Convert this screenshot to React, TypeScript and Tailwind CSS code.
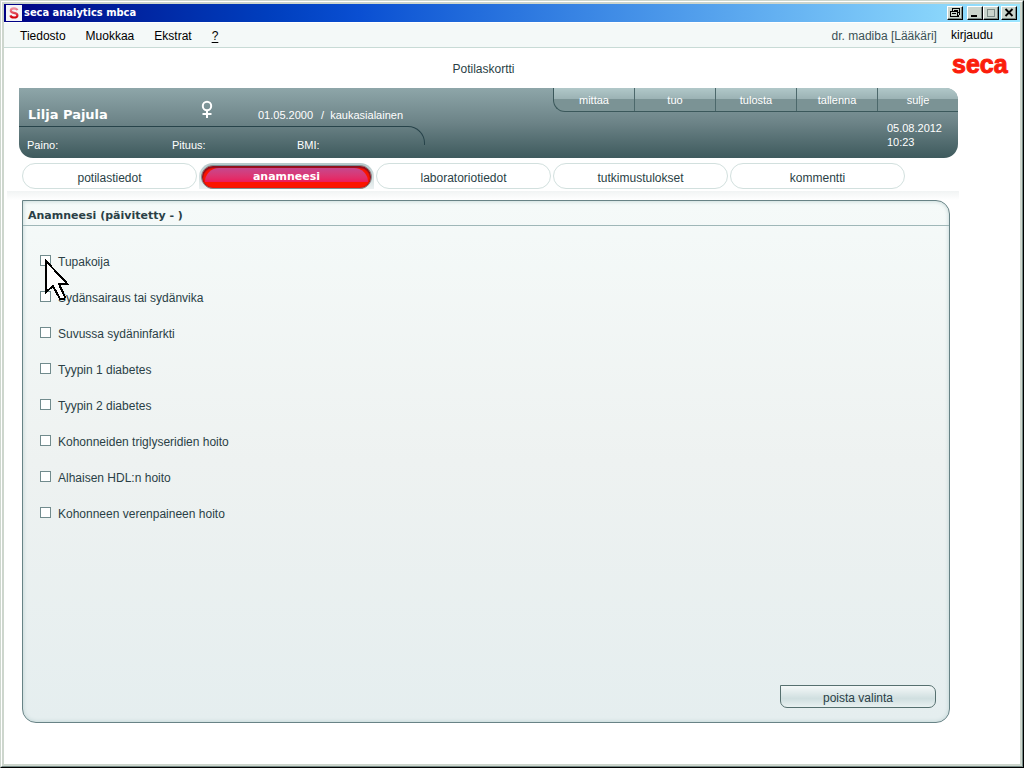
import type { ReactNode } from "react";

const menuItems = ["Tiedosto", "Muokkaa", "Ekstrat"];

const actions = ["mittaa", "tuo", "tulosta", "tallenna", "sulje"];

const tabs = [
  { label: "potilastiedot", active: false },
  { label: "anamneesi", active: true },
  { label: "laboratoriotiedot", active: false },
  { label: "tutkimustulokset", active: false },
  { label: "kommentti", active: false },
];

const conditions = [
  "Tupakoija",
  "Sydänsairaus tai sydänvika",
  "Suvussa sydäninfarkti",
  "Tyypin 1 diabetes",
  "Tyypin 2 diabetes",
  "Kohonneiden triglyseridien hoito",
  "Alhaisen HDL:n hoito",
  "Kohonneen verenpaineen hoito",
];

function WindowButton({
  label,
  children,
}: {
  label: string;
  children: ReactNode;
}) {
  return (
    <button
      type="button"
      aria-label={label}
      className="flex h-[14px] w-4 items-center justify-center border border-t-white border-l-white border-r-black border-b-black bg-[#cbd5cd] shadow-[inset_-1px_-1px_0_#7d8c88]"
    >
      <svg
        width="14"
        height="12"
        viewBox="0 0 14 12"
        fill="none"
        stroke="#000"
        shapeRendering="crispEdges"
        className="shrink-0"
      >
        {children}
      </svg>
    </button>
  );
}

function TitleBar() {
  return (
    <div className="flex h-[18px] items-center bg-linear-to-r from-[#000084] via-[#0a4fd2] via-35% to-[#9be6ff] pr-[3px] pl-[2px]">
      <svg width="16" height="16" viewBox="0 0 16 16" className="shrink-0">
        <defs>
          <linearGradient id="appIcon" x1="0" y1="0" x2="0" y2="1">
            <stop offset="0%" stopColor="#ef8d9d" />
            <stop offset="100%" stopColor="#d4000d" />
          </linearGradient>
        </defs>
        <rect width="16" height="16" fill="#f4f4f8" />
        <path
          d="M11.4 5.2C10.9 3.9 9.6 3.4 8 3.4C6.1 3.4 4.8 4.2 4.8 5.7C4.8 8.6 11.4 7 11.4 10.2C11.4 11.8 10 12.5 8 12.5C6.1 12.5 4.8 11.9 4.4 10.4"
          fill="none"
          stroke="url(#appIcon)"
          strokeWidth="2.2"
        />
      </svg>
      <span className="ml-[2px] font-['DejaVu_Sans_Condensed','DejaVu_Sans',sans-serif] text-[11px] font-bold text-white">
        seca analytics mbca
      </span>
      <div className="ml-auto flex">
        <WindowButton label="Tulosta näyttö">
          <path d="M4.5 5V1.5H11.5V8M2.5 4.5H9.5V9.5H2.5ZM9 9.5H10.5V8M4 6.5H8M6 3.5H10M10 5.5H12" />
        </WindowButton>
        <div className="ml-1 flex">
          <WindowButton label="Pienennä">
            <path d="M3 9H9" strokeWidth="2" />
          </WindowButton>
          <WindowButton label="Suurenna">
            <path d="M3 2H11M3.5 2V10M10.5 2V10M3 9.5H11" stroke="#7d8c88" />
          </WindowButton>
        </div>
        <div className="ml-[2px] flex">
          <WindowButton label="Sulje ikkuna">
            <path
              d="M3.5 2L10.5 9M10.5 2L3.5 9"
              strokeWidth="1.8"
              shapeRendering="auto"
            />
          </WindowButton>
        </div>
      </div>
    </div>
  );
}

function MenuBar() {
  return (
    <nav className="mt-px flex h-[25px] items-center border-b border-[#c8dbd6] bg-[#f4f9f8] pt-px pr-[27px] pl-4">
      <div className="flex gap-5">
        {menuItems.map((item) => (
          <button key={item} type="button">
            {item}
          </button>
        ))}
        <button type="button" className="underline underline-offset-2">
          ?
        </button>
      </div>
      <span className="ml-auto text-[#3c5256]">dr. madiba [Lääkäri]</span>
      <button type="button" className="ml-[14px] pb-[2px]">
        kirjaudu
      </button>
    </nav>
  );
}

function PatientHeader() {
  return (
    <header className="mr-[62px] ml-[15px] flex h-[70px] justify-between overflow-hidden rounded-tr-[12px] rounded-b-[14px] bg-linear-to-b from-[#8ea6a9] via-[#6c8387] via-50% to-[#3e5a5d] text-[11px] text-white">
      <div className="w-[406px]">
        <div className="flex h-[38px] items-end pb-1 pl-[9px]">
          <h2 className="w-[173px] font-['DejaVu_Sans',sans-serif] text-[13px] leading-[14px] font-bold">
            Lilja Pajula
          </h2>
          <svg
            width="12"
            height="22"
            viewBox="0 0 12 22"
            fill="none"
            stroke="#fff"
            strokeWidth="2"
            role="img"
            aria-label="nainen"
          >
            <circle cx="6" cy="6" r="4.2" />
            <path d="M6 10V18M1.500 14H10.500" />
          </svg>
          <span className="ml-[45px] leading-[14px]">01.05.2000</span>
          <span className="ml-2 leading-[14px]">/ &nbsp;kaukasialainen</span>
        </div>
        <div className="flex h-[19px] rounded-tr-[17px] border-t border-r border-[#27434a] pt-[11px] pl-2 leading-[14px]">
          <span className="w-[145px]">Paino:</span>
          <span className="w-[125px]">Pituus:</span>
          <span>BMI:</span>
        </div>
      </div>

      <div className="w-[405px]">
        <div className="flex h-6 overflow-hidden rounded-bl-[12px] border-b border-l border-[#3b585b] bg-linear-to-b from-[#b1c8c9] from-0% via-[#9ab1b3] via-50% to-[#7b9395] to-50%">
          {actions.map((label) => (
            <button
              key={label}
              type="button"
              className="flex-1 border-r border-[#4c686b] last:border-r-0"
            >
              {label}
            </button>
          ))}
        </div>
        <div className="flex justify-end pt-[9px] pr-4 leading-[14px]">
          <time dateTime="2012-08-05T10:23">
            05.08.2012
            <br />
            10:23
          </time>
        </div>
      </div>
    </header>
  );
}

function Tabs() {
  return (
    <div className="mr-[61px] ml-[3px] bg-linear-to-b from-white from-79% via-[#f1f4f4] via-79% to-white pt-[5px] pb-[11px]">
      <div role="tablist" className="ml-[15px] flex gap-[2px]">
        {tabs.map(({ label, active }) =>
          active ? (
            <div
              key={label}
              className="w-[175px] rounded-t-[14px] bg-linear-to-b from-[#b4c8ca] to-[#edf2f2] px-[2px] pt-[2px]"
            >
              {/* red pill with a glossy pink upper half */}
              <button
                type="button"
                role="tab"
                aria-selected="true"
                className="flex h-6 w-full rounded-full border border-[#7b9195] bg-[#fb1400] px-[3px] font-['DejaVu_Sans',sans-serif] text-[11px] leading-[14px] font-bold text-white shadow-[inset_0_1px_1px_1px_#8d1020]"
              >
                <span className="mt-[2px] flex h-[14px] flex-1 justify-center rounded-t-full rounded-b-[6px] bg-linear-to-b from-[#c6468d] to-[#ed175a] pt-[2px]">
                  {label}
                </span>
              </button>
            </div>
          ) : (
            <button
              key={label}
              type="button"
              role="tab"
              aria-selected="false"
              className="h-[26px] w-[175px] rounded-full border border-[#d2e0de] bg-white pt-[3px] text-[#2a3f46]"
            >
              {label}
            </button>
          ),
        )}
      </div>
    </div>
  );
}

function Cursor() {
  return (
    <svg
      width="26"
      height="44"
      viewBox="0 0 26 44"
      shapeRendering="crispEdges"
      className="pointer-events-none absolute top-[5px] left-1"
      aria-hidden="true"
    >
      <path
        d="M2 2V33L9 27L16 40H20L21 38L15 25H23.500Z"
        fill="#fff"
        stroke="#000"
        strokeWidth="2"
      />
    </svg>
  );
}

function AnamnesisPanel() {
  return (
    <section className="mr-[70px] mb-[41px] ml-[18px] flex flex-1 flex-col rounded-tr-[14px] rounded-b-[14px] border border-[#688386] bg-linear-to-b from-[#f5faf9] via-[#eef2f1] via-50% to-[#e5eeef] text-[#2a3f46] shadow-[inset_0_0_4px_#b9cfcf]">
      <h1 className="h-[25px] border-b border-[#9fb7b8] pt-2 pl-[5px] font-['DejaVu_Sans',sans-serif] text-[11px] leading-[14px] font-bold">
        Anamneesi (päivitetty - )
      </h1>
      <ul className="flex flex-col gap-5 pt-7 pl-[17px]">
        {conditions.map((condition, i) => (
          <li key={condition} className="relative flex h-4">
            <label className="flex items-center gap-[7px]">
              <input
                type="checkbox"
                className="mb-[3px] size-[11px] appearance-none border border-[#718b8d] bg-white checked:bg-[#718b8d]"
              />
              {condition}
            </label>
            {i === 0 && (
              <div className="absolute top-0 left-0 z-10">
                <Cursor />
              </div>
            )}
          </li>
        ))}
      </ul>
      <div className="mt-auto flex justify-end pt-6 pr-[13px] pb-[14px]">
        <button
          type="button"
          className="h-[23px] w-[156px] rounded-[7px] rounded-tl-none border border-[#56706f] bg-linear-to-b from-[#f4f8f8] via-[#d0dfe0] via-60% to-[#e9f1f1] pt-[2px]"
        >
          poista valinta
        </button>
      </div>
    </section>
  );
}

export default function App() {
  return (
    <div className="flex min-h-screen flex-col border border-t-[#cdd6cd] border-r-black border-b-black border-l-[#cdd6cd] bg-white font-['Liberation_Sans',Arial,sans-serif] text-[12px] leading-4 text-black">
      <div className="flex flex-1 flex-col border border-t-white border-r-[#758985] border-b-[#758985] border-l-white">
        <div className="flex flex-1 flex-col border-2 border-[#cdd6cd]">
          <TitleBar />
          <MenuBar />
          <div className="flex h-10 justify-between pt-1 pr-3">
            <p className="flex-1 pt-[9px] pl-[11px] text-center text-[#2a3f46]">
              Potilaskortti
            </p>
            <span className="w-[56px] text-[25px] leading-6 font-bold text-[#fb1d0c] [-webkit-text-stroke:1px_#fb1d0c]">
              seca
            </span>
          </div>
          <PatientHeader />
          <Tabs />
          <AnamnesisPanel />
        </div>
      </div>
    </div>
  );
}
